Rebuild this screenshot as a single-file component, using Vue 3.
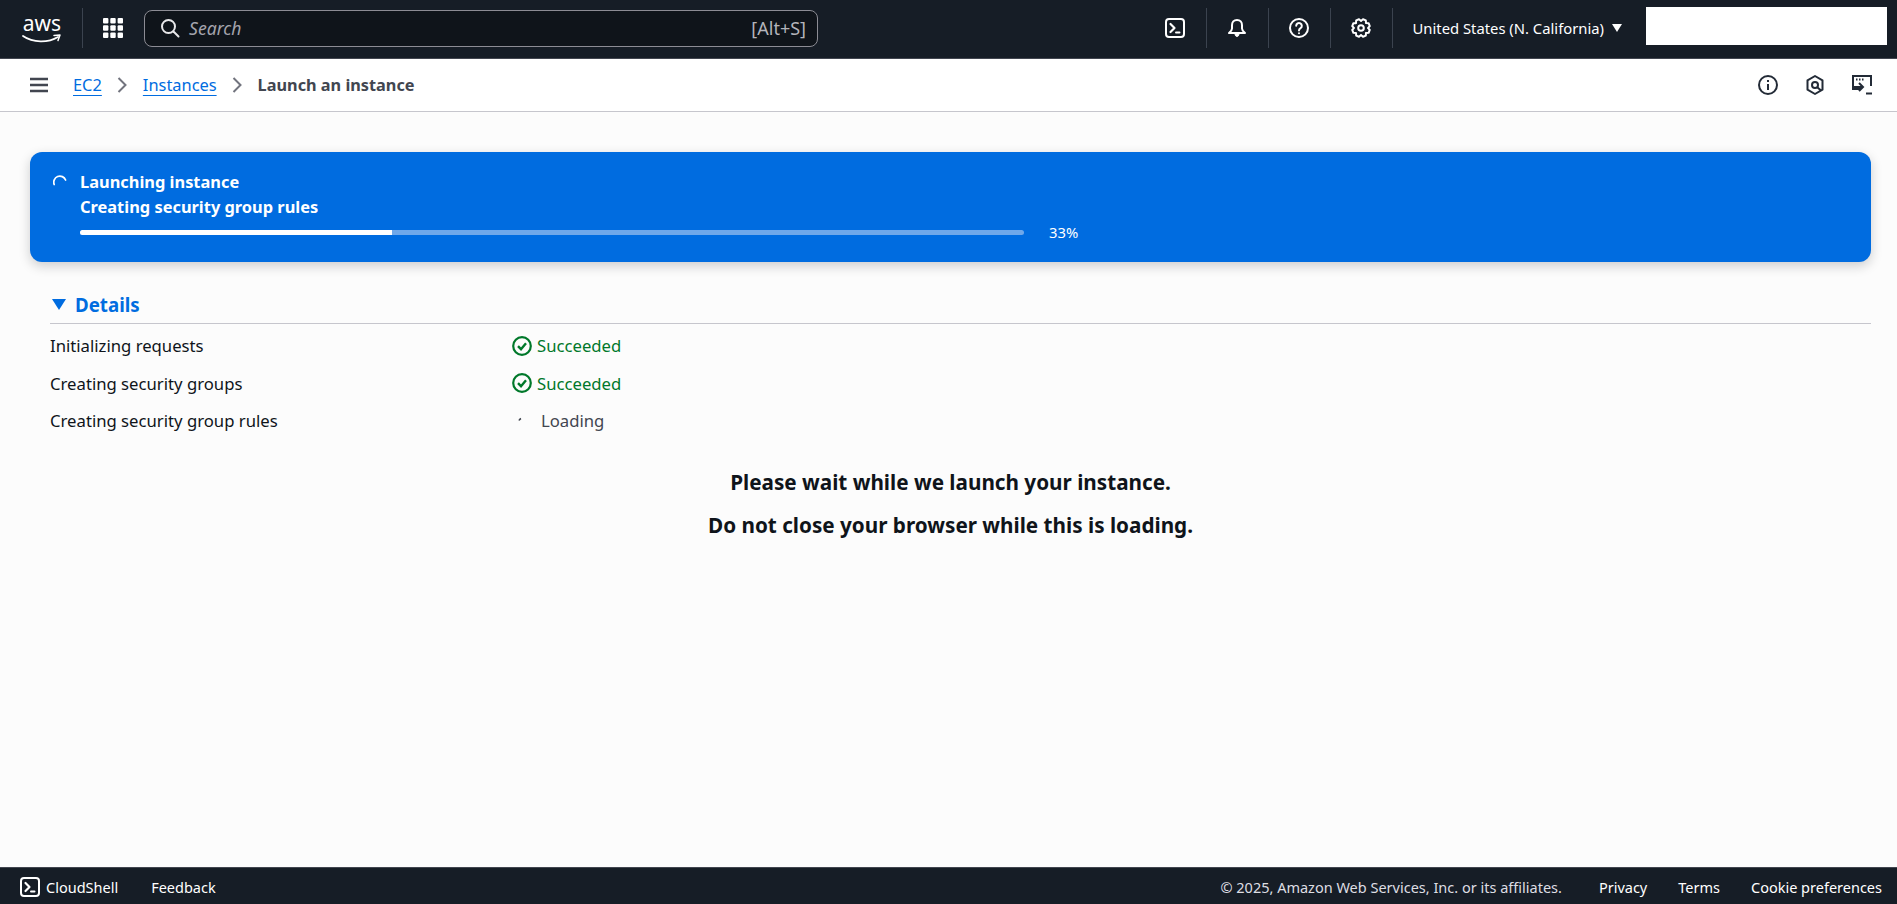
<script setup>
const steps = [
  { id: 1, name: 'Initializing requests', status: 'success', label: 'Succeeded' },
  { id: 2, name: 'Creating security groups', status: 'success', label: 'Succeeded' },
  { id: 3, name: 'Creating security group rules', status: 'loading', label: 'Loading' }
]
const progress = 33

// cog outline: eight teeth around the middle of a 20x20 box
const gearPoints = Array.from({ length: 8 }, (_, i) => {
  const mid = (i * Math.PI) / 4 + Math.PI / 8
  return [[7, -0.4], [9, -0.17], [9, 0.17], [7, 0.4]]
    .map(([r, off]) => `${(10 + r * Math.cos(mid + off)).toFixed(2)},${(10 + r * Math.sin(mid + off)).toFixed(2)}`)
    .join(' ')
}).join(' ')
</script>

<template>
  <div class="page">
    <header class="topbar">
      <div class="logo">
        <span class="logo-text">aws</span>
        <svg class="logo-smile" width="40" height="10" viewBox="0 0 40 10" fill="none">
          <path d="M1 2c10 7 25 7 35 1" stroke="#fff" stroke-width="1.8" stroke-linecap="round" />
          <path d="M32 1.5l6-.5-2 5.5" stroke="#fff" stroke-width="1.5" stroke-linecap="round" stroke-linejoin="round" />
        </svg>
      </div>
      <span class="divider logo-divider"></span>
      <svg class="apps" width="20" height="20" viewBox="0 0 20 20" fill="#fff">
        <rect x="0" y="0" width="5.4" height="5.4" rx="1" /><rect x="7.3" y="0" width="5.4" height="5.4" rx="1" /><rect x="14.6" y="0" width="5.4" height="5.4" rx="1" />
        <rect x="0" y="7.3" width="5.4" height="5.4" rx="1" /><rect x="7.3" y="7.3" width="5.4" height="5.4" rx="1" /><rect x="14.6" y="7.3" width="5.4" height="5.4" rx="1" />
        <rect x="0" y="14.6" width="5.4" height="5.4" rx="1" /><rect x="7.3" y="14.6" width="5.4" height="5.4" rx="1" /><rect x="14.6" y="14.6" width="5.4" height="5.4" rx="1" />
      </svg>
      <div class="search">
        <svg width="20" height="20" viewBox="0 0 20 20" fill="none" stroke="#e8e8ea" stroke-width="2" stroke-linecap="round">
          <circle cx="8.5" cy="8.5" r="6.5" /><path d="M13.5 13.5l5 5" />
        </svg>
        <span class="search-text">Search</span>
        <span class="search-key">[Alt+S]</span>
      </div>
      <div class="top-tools">
        <button class="tool">
          <svg width="20" height="20" viewBox="0 0 20 20" fill="none" stroke="#fff" stroke-width="2" stroke-linejoin="round" stroke-linecap="round">
            <rect x="1" y="1" width="18" height="18" rx="3" /><path d="M5.5 6l4 4-4 4" stroke-width="2.2" /><path d="M11 14.5h3.5" />
          </svg>
        </button>
        <span class="divider"></span>
        <button class="tool">
          <svg width="20" height="20" viewBox="0 0 20 20" fill="none" stroke="#fff" stroke-width="2" stroke-linejoin="round" stroke-linecap="round">
            <path d="M10 2C6.8 2 5 4.3 5 7.2v3.3c0 1.6-1.2 3-3 4.5h16c-1.8-1.5-3-2.9-3-4.5V7.2C15 4.3 13.2 2 10 2z" />
            <path d="M8 16c0 1.6.9 2.5 2 2.5s2-.9 2-2.5z" fill="#fff" stroke-width="1" />
          </svg>
        </button>
        <span class="divider"></span>
        <button class="tool">
          <svg width="20" height="20" viewBox="0 0 20 20" fill="none" stroke="#fff" stroke-width="2" stroke-linecap="round">
            <circle cx="10" cy="10" r="9" /><path d="M7.2 7.8a2.8 2.8 0 1 1 4.3 2.4c-1 .6-1.5 1.1-1.5 2.3" /><path d="M10 15.2v.1" />
          </svg>
        </button>
        <span class="divider"></span>
        <button class="tool">
          <svg width="20" height="20" viewBox="0 0 20 20" fill="none" stroke="#fff" stroke-width="2" stroke-linejoin="round">
            <polygon :points="gearPoints" />
            <circle cx="10" cy="10" r="2.8" />
          </svg>
        </button>
        <span class="divider"></span>
        <span class="region">United States (N. California)</span>
        <svg class="caret" width="10" height="8" viewBox="0 0 10 8" fill="#fff"><path d="M0 0h10L5 8z" /></svg>
        <div class="account"></div>
      </div>
    </header>

    <nav class="crumbbar">
      <svg class="menu" width="18" height="16" viewBox="0 0 18 16" fill="none" stroke="#424650" stroke-width="2.4">
        <path d="M0 2h18M0 8h18M0 14h18" />
      </svg>
      <a class="crumb-link">EC2</a>
      <svg class="chev" width="11" height="16" viewBox="0 0 11 16" fill="none" stroke="#72747e" stroke-width="2"><path d="M1.5 1l7 7-7 7" /></svg>
      <a class="crumb-link">Instances</a>
      <svg class="chev" width="11" height="16" viewBox="0 0 11 16" fill="none" stroke="#72747e" stroke-width="2"><path d="M1.5 1l7 7-7 7" /></svg>
      <span class="crumb-current">Launch an instance</span>
      <div class="crumb-tools">
        <svg width="20" height="20" viewBox="0 0 20 20" fill="none" stroke="#232b37" stroke-width="2">
          <circle cx="10" cy="10" r="9" /><path d="M10 9v6" /><path d="M10 5v2" />
        </svg>
        <svg width="20" height="20" viewBox="0 0 20 20" fill="none" stroke="#232b37" stroke-width="2" stroke-linejoin="round">
          <path d="M10 1l7.5 4.3v9.4L10 19l-7.5-4.3V5.3z" /><circle cx="10" cy="10" r="3" /><path d="M12 12l4 3.5" />
        </svg>
        <svg width="20" height="20" viewBox="0 0 20 20" fill="none" stroke="#232b37" stroke-width="2">
          <path d="M9 14H1V1h18v10" /><path d="M4 4.5h1.5M7 4.5h1.5M10 4.5h1.5" /><path d="M7 8l4 4-4 4" /><path d="M2 12h8" /><path d="M14 18.5h6" />
        </svg>
      </div>
    </nav>

    <main class="content">
      <section class="banner">
        <svg class="banner-spin" width="14" height="14" viewBox="0 0 14 14" fill="none" stroke="#fff" stroke-width="1.7" stroke-linecap="round">
          <path d="M1.2 9.5A6 6 0 0 1 12.6 5" />
        </svg>
        <div class="banner-body">
          <div class="banner-title">Launching instance</div>
          <div class="banner-title">Creating security group rules</div>
          <div class="banner-progress">
            <div class="track"><div class="fill" :style="{ width: `${progress}%` }"></div></div>
            <span class="percent">{{ progress }}%</span>
          </div>
        </div>
      </section>

      <section class="details">
        <div class="details-head">
          <svg width="14" height="11" viewBox="0 0 14 11" fill="#006ce0"><path d="M0 0h14L7 11z" /></svg>
          <span>Details</span>
        </div>
        <div class="rows">
          <div v-for="step in steps" :key="step.id" class="row">
            <span class="row-name">{{ step.name }}</span>
            <span class="status" :class="step.status">
              <svg v-if="step.status === 'success'" width="20" height="20" viewBox="0 0 20 20" fill="none" stroke="#00782a" stroke-width="2.2">
                <circle cx="10" cy="10" r="8.8" /><path d="M6 10.2l3 3 5-6" stroke-width="2.4" />
              </svg>
              <svg v-else width="20" height="20" viewBox="0 0 20 20" fill="none" stroke="#424650" stroke-width="1.6">
                <path d="M7 9.5a4 4 0 0 1 2-2" />
              </svg>
              {{ step.label }}
            </span>
          </div>
        </div>
      </section>

      <div class="wait">
        <p>Please wait while we launch your instance.</p>
        <p>Do not close your browser while this is loading.</p>
      </div>
    </main>

    <footer class="footer">
      <svg width="20" height="20" viewBox="0 0 20 20" fill="none" stroke="#fff" stroke-width="2" stroke-linejoin="round" stroke-linecap="round">
        <rect x="1" y="1" width="18" height="18" rx="3" /><path d="M5.5 6l4 4-4 4" stroke-width="2.2" /><path d="M11 14.5h3.5" />
      </svg>
      <span class="foot-shell">CloudShell</span>
      <span class="foot-feedback">Feedback</span>
      <span class="foot-copy">© 2025, Amazon Web Services, Inc. or its affiliates.</span>
      <span class="foot-link">Privacy</span>
      <span class="foot-link">Terms</span>
      <span class="foot-link">Cookie preferences</span>
    </footer>
  </div>
</template>

<style>
body { margin: 0; }
</style>

<style scoped>
.page {
  display: flex;
  flex-direction: column;
  height: 904px;
  overflow: hidden;
  font-family: "Noto Sans", "Open Sans", sans-serif;
  font-size: 16.7px;
  color: #0f141a;
  background: #fcfcfc;
}
.topbar {
  display: flex;
  align-items: center;
  flex: 0 0 59px;
  padding: 0 10px 2px 22px;
  box-sizing: border-box;
  background: #161d26;
  color: #fff;
  border-bottom: 1px solid #424650;
}
.logo {
  display: flex;
  flex-direction: column;
  align-items: center;
  width: 40px;
  padding-top: 2px;
}
.logo-text {
  font-size: 21px;
  line-height: 19px;
  color: #fff;
}
.logo-smile { margin-top: 1px; }
.divider {
  flex: none;
  width: 1px;
  height: 40px;
  background: #3b434f;
}
.logo-divider { margin-left: 20px; }
.apps { margin-left: 20px; flex: none; }
.search {
  display: flex;
  align-items: center;
  width: 674px;
  height: 37px;
  margin-left: 21px;
  padding: 0 11px 0 15px;
  box-sizing: border-box;
  background: #0f141a;
  border: 1px solid #8c8c94;
  border-radius: 8px;
}
.search-text {
  margin-left: 9px;
  font-style: italic;
  font-size: 17.6px;
  color: #a4a4ad;
}
.search-key {
  margin-left: auto;
  font-size: 18px;
  color: #b4b4bb;
}
.top-tools {
  display: flex;
  align-items: center;
  margin-left: auto;
}
.tool {
  display: flex;
  justify-content: center;
  width: 61px;
  padding: 0;
  border: 0;
  background: none;
}
.region {
  margin-left: 20px;
  font-size: 14.8px;
  white-space: nowrap;
}
.caret { margin-left: 8px; }
.account {
  width: 241px;
  height: 38px;
  margin: 0 0 4px 24px;
  background: #fff;
}
.crumbbar {
  display: flex;
  align-items: center;
  flex: 0 0 52px;
  padding: 0 25px 0 30px;
  background: #fff;
  border-bottom: 1px solid #c6c6cd;
}
.menu { margin-right: 25px; }
.crumb-link {
  margin-bottom: 1px;
  color: #006ce0;
  font-size: 16.4px;
  text-decoration: underline;
  text-underline-offset: 4px;
}
.chev { margin: 0 15px; }
.crumb-current {
  margin-bottom: 1px;
  font-size: 16.3px;
  font-weight: 700;
  color: #424650;
}
.crumb-tools {
  display: flex;
  gap: 27px;
  margin-left: auto;
}
.content {
  flex: 1;
  padding: 40px 26px 0 30px;
}
.banner {
  display: flex;
  height: 110px;
  padding: 17px 17px 0 23px;
  box-sizing: border-box;
  background: #006ce0;
  border-radius: 12px;
  box-shadow: 0 4px 12px rgba(15, 20, 26, 0.2);
  color: #fff;
}
.banner-spin { margin-top: 6px; }
.banner-title {
  font-weight: 700;
  line-height: 25px;
  font-size: 16.4px;
}
.banner-body {
  margin-left: 13px;
}
.banner-progress {
  display: flex;
  align-items: center;
  margin-top: 3px;
}
.track {
  width: 944px;
  height: 5px;
  border-radius: 3px;
  background: #6fa8ea;
  overflow: hidden;
}
.fill {
  height: 100%;
  background: #fff;
}
.percent {
  margin-left: 25px;
  font-size: 14.8px;
}
.details {
  margin: 22px 0 0 20px;
}
.details-head {
  display: flex;
  align-items: center;
  gap: 9px;
  height: 40px;
  padding: 2px 0 0 2px;
  box-sizing: border-box;
  font-size: 18.7px;
  font-weight: 700;
  color: #006ce0;
  border-bottom: 1px solid #c6c6cd;
}
.rows { padding-top: 3px; }
.row {
  display: flex;
  align-items: center;
  height: 37.5px;
}
.row-name { width: 462px; }
.status {
  display: flex;
  align-items: center;
  gap: 5px;
}
.status.success { color: #00782a; }
.status.loading { color: #424650; gap: 9px; }
.wait {
  margin-top: 30.5px;
  text-align: center;
  font-size: 20.7px;
  font-weight: 700;
}
.wait p {
  margin: 0 0 18px;
  line-height: 25px;
}
.footer {
  display: flex;
  align-items: center;
  flex: 0 0 37px;
  padding: 1px 15px 0 20px;
  background: #161d26;
  color: #fff;
  font-size: 14.5px;
  border-top: 1px solid #424650;
  box-sizing: border-box;
}
.foot-shell { margin-left: 6px; }
.foot-feedback { margin-left: 33px; }
.foot-copy {
  margin-left: auto;
  margin-right: 6px;
  color: #dedee3;
}
.foot-link { margin-left: 31px; }
</style>
